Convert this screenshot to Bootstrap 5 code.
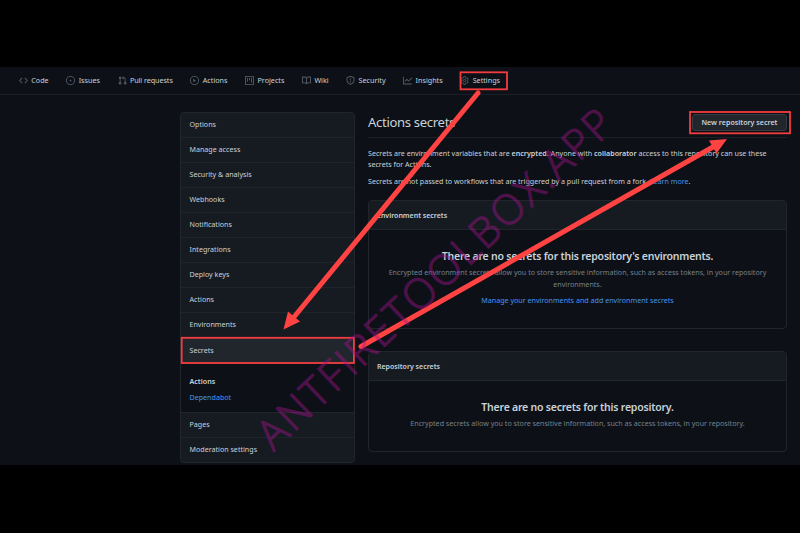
<!DOCTYPE html>
<html lang="en">
<head>
<meta charset="utf-8">
<meta name="viewport" content="width=device-width, initial-scale=1">
<title>Actions secrets</title>
<link href="https://cdn.jsdelivr.net/npm/bootstrap@5.3.0/dist/css/bootstrap.min.css" rel="stylesheet">
<style>
body{background:#000;color:#c9d1d9;font-family:"Noto Sans","Open Sans",sans-serif;font-size:7.14px;line-height:11.5px;height:533px;overflow:hidden}
.stage{width:800px;height:533px;padding-top:67px}
.app{height:398px;background:#0d1117}
.repo-nav{height:28px;border-bottom:1px solid #1b2027;padding-left:19px;gap:17.7px}
.repo-nav a{color:#c9d1d9;gap:3.3px;font-size:7.2px;letter-spacing:0;white-space:nowrap}
.repo-nav a:nth-child(3){letter-spacing:-.06px}
.repo-nav svg{width:9px;height:9px;fill:#59616b;flex:none}
.layout{padding:16px 13px 0 180px;gap:13px}
.side{width:175px;height:351px;margin-top:1px;border:1px solid #21262d;border-radius:4px;background:#161b22;overflow:hidden;flex:none}
.side .list-group-item{height:25px;flex:none;padding:0 0 0 8.5px;background:#161b22;border:0;border-bottom:1px solid #1f242b;color:#c9d1d9;display:flex;align-items:center;line-height:1}
.side .list-group-item.current{background:#21262d;height:26px}
.side .list-group-item:last-child{border:0;height:24px}
.side .sub{height:49px;flex:none;background:#0d1117;padding:11.500px 0 0 8.5px;border-bottom:1px solid #21262d}
.side .sub div{height:16px;line-height:10px}
a,.blue{color:#4493f0;text-decoration:none}
.main-head{height:27px;border-bottom:1px solid #1b2027}
h1{font-size:13.1px;letter-spacing:-.33px;line-height:20px;margin:1px 0 0}
.btn-new{height:17px;width:95px;padding:0;margin-top:3px;font-size:7.1px;line-height:15px;font-weight:600;color:#c9d1d9;background:#21262d;border:1px solid #363b42;border-radius:3px;white-space:nowrap}
.intro{margin:9.5px 0 5px}
.intro2{margin:0 0 13px}
.box{border:1px solid #21262d;border-radius:4px;background:#0d1117}
.box header{height:29px;background:#161b22;border-bottom:1px solid #21262d;padding:1px 8px 0;line-height:28px;font-weight:600;font-size:7px;border-radius:3px 3px 0 0}
.box h2{font-size:10.500px;letter-spacing:-.22px;line-height:14px;font-weight:600;margin:0 0 4px}
.box p{color:#768089;margin:0}
.box .manage{margin-top:5px}
.env{height:129px;margin-bottom:22px}
.rep{height:101px}
.blank{padding-top:19px}
.fw-semibold,b{font-weight:600}
.marks{left:0;top:0;pointer-events:none}
</style>
<script src="https://cdn.jsdelivr.net/npm/bootstrap@5.3.0/dist/js/bootstrap.bundle.min.js"></script>
</head>
<body>
<div class="stage position-relative">
<div class="app">
<nav class="repo-nav d-flex align-items-center">
<a class="d-flex align-items-center" href="#"><svg viewBox="0 0 16 16"><path d="M4.72 3.22a.75.75 0 011.06 1.06L2.06 8l3.72 3.72a.75.75 0 11-1.06 1.06L.47 8.53a.75.75 0 010-1.06l4.25-4.25zm6.56 0a.75.75 0 10-1.06 1.06L13.94 8l-3.72 3.72a.75.75 0 101.06 1.06l4.25-4.25a.75.75 0 000-1.06l-4.25-4.25z"/></svg><span>Code</span></a>
<a class="d-flex align-items-center" href="#"><svg viewBox="0 0 16 16"><path d="M8 9.5a1.5 1.5 0 100-3 1.5 1.5 0 000 3z"/><path fill-rule="evenodd" d="M8 0a8 8 0 100 16A8 8 0 008 0zM1.5 8a6.5 6.5 0 1113 0 6.5 6.5 0 01-13 0z"/></svg><span>Issues</span></a>
<a class="d-flex align-items-center" href="#"><svg viewBox="0 0 16 16"><path fill-rule="evenodd" d="M7.177 3.073L9.573.677A.25.25 0 0110 .854v4.792a.25.25 0 01-.427.177L7.177 3.427a.25.25 0 010-.354zM3.75 2.5a.75.75 0 100 1.5.75.75 0 000-1.5zm-2.25.75a2.25 2.25 0 113 2.122v5.256a2.251 2.251 0 11-1.5 0V5.372A2.25 2.25 0 011.5 3.25zM11 2.5h-1V4h1a1 1 0 011 1v5.628a2.251 2.251 0 101.5 0V5A2.5 2.5 0 0011 2.5zm1 10.25a.75.75 0 111.5 0 .75.75 0 01-1.5 0zM3.75 12a.75.75 0 100 1.5.75.75 0 000-1.5z"/></svg><span>Pull requests</span></a>
<a class="d-flex align-items-center" href="#"><svg viewBox="0 0 16 16"><path fill-rule="evenodd" d="M1.5 8a6.5 6.5 0 1113 0 6.5 6.5 0 01-13 0zM8 0a8 8 0 100 16A8 8 0 008 0zM6.379 5.227A.25.25 0 006 5.442v5.117a.25.25 0 00.379.214l4.264-2.559a.25.25 0 000-.428L6.379 5.227z"/></svg><span>Actions</span></a>
<a class="d-flex align-items-center" href="#"><svg viewBox="0 0 16 16"><path fill-rule="evenodd" d="M1.75 0A1.75 1.75 0 000 1.75v12.5C0 15.216.784 16 1.75 16h12.5A1.75 1.75 0 0016 14.25V1.75A1.75 1.75 0 0014.25 0H1.75zM1.5 1.75a.25.25 0 01.25-.25h12.5a.25.25 0 01.25.25v12.5a.25.25 0 01-.25.25H1.75a.25.25 0 01-.25-.25V1.75zM11.75 3a.75.75 0 00-.75.75v7.5a.75.75 0 001.5 0v-7.5a.75.75 0 00-.75-.75zm-8.25.75a.75.75 0 011.5 0v5.5a.75.75 0 01-1.5 0v-5.5zM8 3a.75.75 0 00-.75.75v3.5a.75.75 0 001.5 0v-3.5A.75.75 0 008 3z"/></svg><span>Projects</span></a>
<a class="d-flex align-items-center" href="#"><svg viewBox="0 0 16 16"><path fill-rule="evenodd" d="M0 1.75A.75.75 0 01.75 1h4.253c1.227 0 2.317.59 3 1.501A3.744 3.744 0 0111.006 1h4.245a.75.75 0 01.75.75v10.5a.75.75 0 01-.75.75h-4.507a2.25 2.25 0 00-1.591.659l-.622.621a.75.75 0 01-1.06 0l-.622-.621A2.25 2.25 0 005.258 13H.75a.75.75 0 01-.75-.75V1.75zm8.755 3a2.25 2.25 0 012.25-2.25H14.5v9h-3.757c-.71 0-1.4.201-1.992.572l.004-7.322zm-1.504 7.324l.004-5.073-.002-2.253A2.25 2.25 0 005.003 2.5H1.5v9h3.757a3.75 3.75 0 011.994.574z"/></svg><span>Wiki</span></a>
<a class="d-flex align-items-center" href="#"><svg viewBox="0 0 16 16"><path fill-rule="evenodd" d="M7.467.133a1.75 1.75 0 011.066 0l5.25 1.68A1.75 1.75 0 0115 3.48V7c0 1.566-.32 3.182-1.303 4.682-.983 1.498-2.585 2.813-5.032 3.855a1.7 1.7 0 01-1.33 0c-2.447-1.042-4.049-2.357-5.032-3.855C1.32 10.182 1 8.566 1 7V3.48a1.75 1.75 0 011.217-1.667l5.25-1.68zm.61 1.429a.25.25 0 00-.153 0l-5.25 1.68a.25.25 0 00-.174.238V7c0 1.358.275 2.666 1.057 3.86.784 1.194 2.121 2.34 4.366 3.297a.2.2 0 00.154 0c2.245-.956 3.582-2.104 4.366-3.298C13.225 9.666 13.5 8.36 13.5 7V3.48a.25.25 0 00-.174-.237l-5.25-1.68zM9 10.5a1 1 0 11-2 0 1 1 0 012 0zm-.25-5.75a.75.75 0 10-1.5 0v3a.75.75 0 001.5 0v-3z"/></svg><span>Security</span></a>
<a class="d-flex align-items-center" href="#"><svg viewBox="0 0 16 16"><path fill-rule="evenodd" d="M1.5 1.75a.75.75 0 00-1.5 0v12.5c0 .414.336.75.75.75h14.5a.75.75 0 000-1.5H1.5V1.75zm14.28 2.53a.75.75 0 00-1.06-1.06L10 7.94 7.53 5.47a.75.75 0 00-1.06 0L3.22 8.72a.75.75 0 001.06 1.06L7 7.06l2.47 2.47a.75.75 0 001.06 0l5.25-5.25z"/></svg><span>Insights</span></a>
<a class="d-flex align-items-center" href="#"><svg viewBox="0 0 16 16"><g fill="none" stroke="#59616b" stroke-width="1.5" stroke-linejoin="round"><path d="M6.7 1h2.6l.5 2 1.4.8 2-.6 1.3 2.3L13 7v2l1.5 1.5-1.3 2.3-2-.6-1.4.8-.5 2H6.700l-.5-2-1.4-.8-2 .6-1.300-2.300L3 9V7L1.500 5.500l1.300-2.300 2 .6L6.200 3z"/><circle cx="8" cy="8" r="2.2"/></g></svg><span>Settings</span></a>
</nav>
<div class="layout d-flex">
<aside class="side list-group list-group-flush">
<a class="list-group-item" href="#">Options</a>
<a class="list-group-item" href="#">Manage access</a>
<a class="list-group-item" href="#">Security &amp; analysis</a>
<a class="list-group-item" href="#">Webhooks</a>
<a class="list-group-item" href="#">Notifications</a>
<a class="list-group-item" href="#">Integrations</a>
<a class="list-group-item" href="#">Deploy keys</a>
<a class="list-group-item" href="#">Actions</a>
<a class="list-group-item" href="#">Environments</a>
<a class="list-group-item current" href="#">Secrets</a>
<div class="sub"><div class="fw-semibold">Actions</div><div class="blue">Dependabot</div></div>
<a class="list-group-item" href="#">Pages</a>
<a class="list-group-item" href="#">Moderation settings</a>
</aside>
<main class="flex-grow-1">
<div class="main-head d-flex justify-content-between align-items-start"><h1 class="fw-normal">Actions secrets</h1><button class="btn btn-new">New repository secret</button></div>
<p class="intro">Secrets are environment variables that are <b>encrypted</b>. Anyone with <b>collaborator</b> access to this repository can use these<br>secrets for Actions.</p>
<p class="intro2">Secrets are not passed to workflows that are triggered by a pull request from a fork. <a href="#">Learn more</a>.</p>
<section class="box env"><header>Environment secrets</header><div class="blank text-center"><h2>There are no secrets for this repository's environments.</h2><p>Encrypted environment secrets allow you to store sensitive information, such as access tokens, in your repository<br>environments.</p><p class="manage"><a href="#">Manage your environments and add environment secrets</a></p></div></section>
<section class="box rep"><header>Repository secrets</header><div class="blank text-center"><h2>There are no secrets for this repository.</h2><p>Encrypted secrets allow you to store sensitive information, such as access tokens, in your repository.</p></div></section>
</main>
</div>
</div>
<svg class="marks position-absolute" width="800" height="533" viewBox="0 0 800 533">
<g fill="none" stroke="#f33c3f" stroke-width="1.8"><rect x="460.500" y="72.300" width="46.500" height="17"/><rect x="181.700" y="337.800" width="172.200" height="25.200"/><rect x="690" y="112" width="100" height="21.300"/></g>
<g stroke="#ff4343" stroke-width="5" stroke-linecap="round" fill="#ff4343"><path d="M478 93L294 317"/><path d="M361 346.500L713 147"/></g>
<path fill="#ff4343" d="M283.500 329.500L288 311.500L300 321.500ZM727 139L709 140.500L716.500 153.500Z"/>
<text transform="translate(273.500 452) rotate(-43.500)" font-family="Open Sans, sans-serif" font-weight="300" font-size="41.500" textLength="472" lengthAdjust="spacing" fill="#a5128b" stroke="#a5128b" stroke-width="1.2" opacity=".43">ANTFIRETOOLBOX.APP</text>
</svg>
</div>
</body>
</html>
